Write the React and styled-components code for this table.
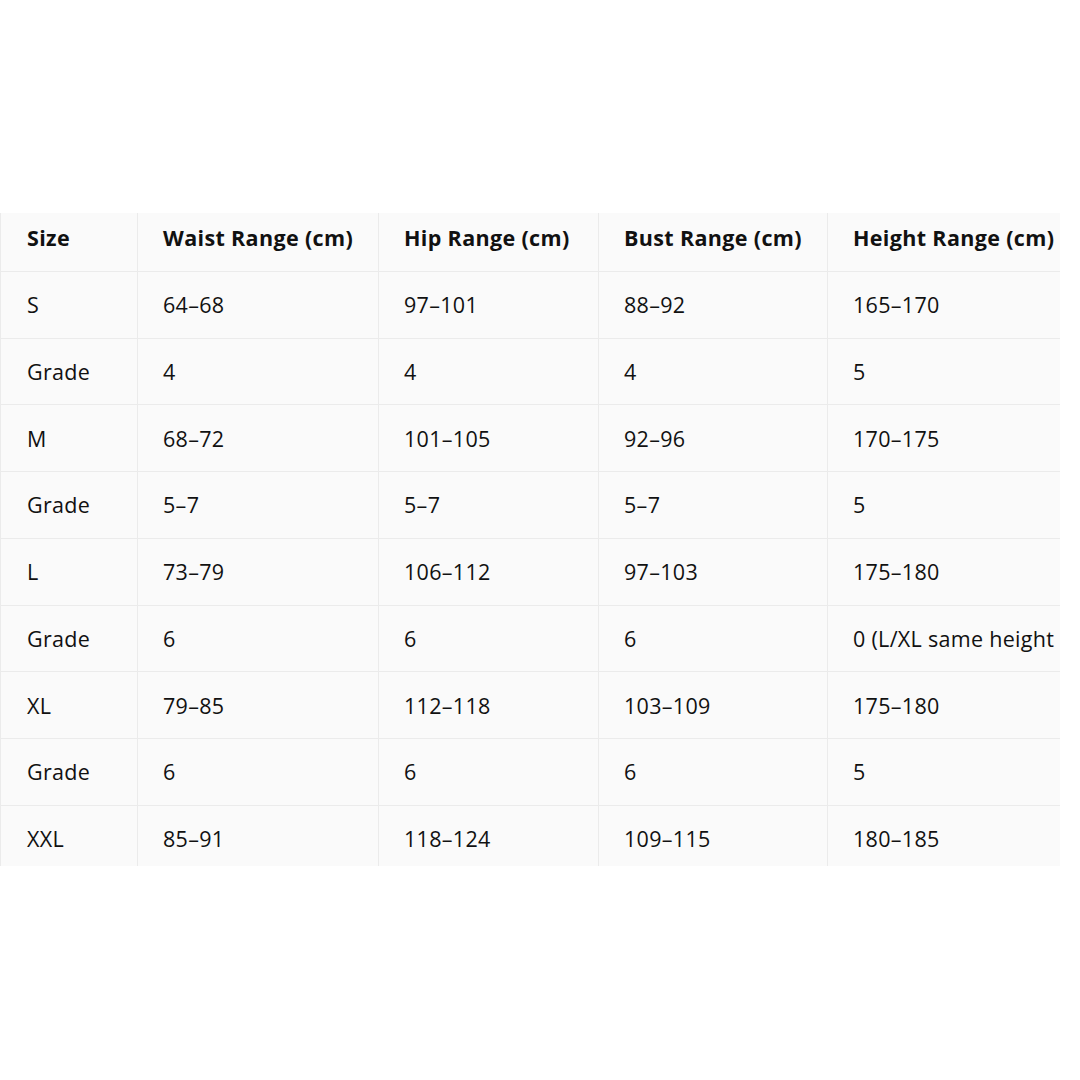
import React from "react";
import styled, { createGlobalStyle } from "styled-components";

const Global = createGlobalStyle`
  html, body { margin: 0; padding: 0; background: #ffffff; }
  body { font-family: "Open Sans", "Noto Sans", sans-serif; }
`;

const Page = styled.div`
  width: 1080px;
  height: 1080px;
  padding-top: 213px;
  box-sizing: border-box;
`;

const Frame = styled.div`
  width: 1060px;
  height: 653px;
  overflow: hidden;
  background: #fafafa;
`;

const Grid = styled.div`
  display: grid;
  grid-template-columns: 138px 241px 220px 229px 232px;
  grid-auto-rows: 66.75px;
  margin-top: -8px;
`;

const Cell = styled.div`
  display: flex;
  align-items: center;
  padding-left: ${(p) => (p.$first ? 26 : 25)}px;
  box-sizing: border-box;
  border-bottom: 1.5px solid #ebebeb;
  border-right: ${(p) => (p.$last ? "none" : "1.5px solid #ebebeb")};
  border-left: ${(p) => (p.$first ? "1.5px solid #ebebeb" : "none")};
  font-size: 21.5px;
  font-weight: ${(p) => (p.$head ? 700 : 400)};
  color: #111111;
  white-space: nowrap;
  letter-spacing: ${(p) => (p.$head ? "0.35px" : "0.3px")};
`;

const header = ["Size", "Waist Range (cm)", "Hip Range (cm)", "Bust Range (cm)", "Height Range (cm)"];
const rows = [
  ["S", "64–68", "97–101", "88–92", "165–170"],
  ["Grade", "4", "4", "4", "5"],
  ["M", "68–72", "101–105", "92–96", "170–175"],
  ["Grade", "5–7", "5–7", "5–7", "5"],
  ["L", "73–79", "106–112", "97–103", "175–180"],
  ["Grade", "6", "6", "6", "0 (L/XL same height"],
  ["XL", "79–85", "112–118", "103–109", "175–180"],
  ["Grade", "6", "6", "6", "5"],
  ["XXL", "85–91", "118–124", "109–115", "180–185"],
];

export default function App() {
  return (
    <Page>
      <Global />
      <Frame>
        <Grid>
          {header.map((h, i) => (
            <Cell key={"h" + i} $head $first={i === 0} $last={i === 4}>
              {h}
            </Cell>
          ))}
          {rows.map((r, ri) =>
            r.map((c, ci) => (
              <Cell key={ri + "-" + ci} $first={ci === 0} $last={ci === 4}>
                {c}
              </Cell>
            ))
          )}
        </Grid>
      </Frame>
    </Page>
  );
}
